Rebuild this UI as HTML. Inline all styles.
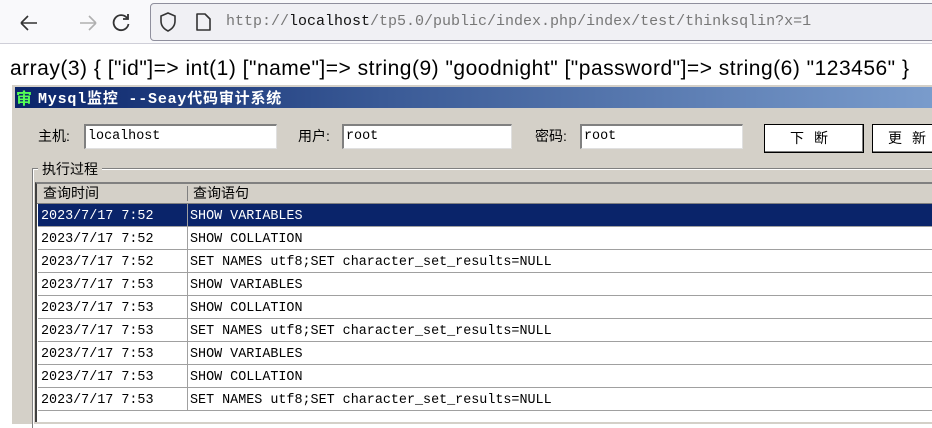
<!DOCTYPE html>
<html><head><meta charset="utf-8"><style>
*{margin:0;padding:0;box-sizing:border-box}
body{width:932px;height:417px;overflow:hidden;background:#fff;position:relative;font-family:"Liberation Sans","Noto Sans CJK SC",sans-serif}
.a{position:absolute}
.mono{font-family:"Liberation Mono","Noto Sans CJK SC",monospace}
.cjk{font-family:"Noto Sans CJK SC","WenQuanYi Zen Hei",sans-serif}
.inp{position:absolute;background:#fff;border-top:2px solid #808080;border-left:2px solid #808080;border-right:1px solid #e0e0e0;border-bottom:1px solid #e0e0e0;font:13.4px "Liberation Mono",monospace;padding:1px 0 0 2px;height:25px;line-height:20px}
.lbl{position:absolute;font-size:14px;color:#000}
.btn{position:absolute;background:#fff;border:1px solid #000;box-shadow:inset -1px -1px 0 #808080;font-size:14px;text-align:center;line-height:26px;letter-spacing:10px}
.row{position:absolute;left:38px;width:900px;height:23px;border-bottom:1px solid #a0a0a0;font:13.4px "Liberation Mono",monospace;line-height:25px;background:#fff}
.row span{position:absolute;top:0}
.row .c1{left:3px}.row .c2{left:152px}
.row .d{position:absolute;left:149px;top:0;width:1px;height:23px;background:#a0a0a0}
</style></head><body>
<div class="a" style="left:0;top:0;width:932px;height:44px;background:#f9f9fb;border-bottom:1px solid #cfcfd8"></div>
<svg class="a" style="left:18px;top:12px" width="90" height="22" viewBox="0 0 90 22">
<path d="M3 11H19M3 11L10 4M3 11L10 18" stroke="#333" stroke-width="1.6" fill="none"/>
<path d="M64 11H80M80 11L73 4M80 11L73 18" stroke="#b0b0b0" stroke-width="1.6" fill="none" transform="translate(-2 0)"/>
</svg>
<svg class="a" style="left:110px;top:12px" width="22" height="22" viewBox="0 0 22 22">
<path d="M17 6A7.5 7.5 0 1 0 18.5 12" stroke="#333" stroke-width="1.8" fill="none"/>
<path d="M18 2V7H13" stroke="#333" stroke-width="1.8" fill="none"/>
</svg>
<div class="a" style="left:150px;top:3px;width:800px;height:38px;background:#f0f0f4;border:1px solid #8f8f9d;border-radius:4px"></div>
<svg class="a" style="left:158px;top:11px" width="60" height="22" viewBox="0 0 60 22">
<path d="M10 2L3 5V10C3 15 6 18 10 20C14 18 17 15 17 10V5Z" stroke="#333" stroke-width="1.6" fill="none"/>
<path d="M39 3H47L52 8V19H39Z" stroke="#333" stroke-width="1.6" fill="none" stroke-linejoin="round"/>
</svg>
<div class="a mono" style="left:226px;top:13px;font-size:15px;color:#777;white-space:nowrap">http://<span style="color:#111">localhost</span>/tp5.0/public/index.php/index/test/thinksqlin?x=1</div>
<div class="a" style="left:10px;top:57px;font-size:21px;white-space:nowrap;color:#000;letter-spacing:0.5px">array(3) { ["id"]=&gt; int(1) ["name"]=&gt; string(9) "goodnight" ["password"]=&gt; string(6) "123456" }</div>
<!-- window -->
<div class="a" style="left:11px;top:84px;width:925px;height:340px;background:#d4d0c8;border-left:1px solid #fff;border-top:1px solid #fff"></div>
<div class="a" style="left:15px;top:87px;width:920px;height:21px;background:linear-gradient(90deg,#0a246a,#3a5a96 40%,#7a9ccc)"></div>
<div class="a cjk" style="left:16px;top:88px;width:20px;height:19px;color:#5f5;font-size:16px;line-height:19px;font-weight:bold">审</div>
<div class="a mono" style="left:38px;top:88px;color:#fff;font-size:15px;font-weight:bold;line-height:20px;white-space:nowrap;letter-spacing:0.8px">Mysql<span class="cjk">监控</span> --Seay<span class="cjk">代码审计系统</span></div>
<div class="lbl" style="left:38px;top:126px">主机:</div>
<div class="inp" style="left:84px;top:124px;width:193px">localhost</div>
<div class="lbl" style="left:298px;top:126px">用户:</div>
<div class="inp" style="left:342px;top:124px;width:170px">root</div>
<div class="lbl" style="left:535px;top:126px">密码:</div>
<div class="inp" style="left:580px;top:124px;width:163px">root</div>
<div class="btn" style="left:764px;top:124px;width:100px;height:29px">下断</div>
<div class="btn" style="left:872px;top:124px;width:80px;height:29px">更新</div>
<div class="a" style="left:32px;top:168px;width:910px;height:260px;border-top:1px solid #808080;border-left:1px solid #808080;box-shadow:inset 1px 1px 0 #fff"></div>
<div class="lbl" style="left:38px;top:159px;background:#d4d0c8;padding:0 4px;font-size:14px">执行过程</div>
<div class="a" style="left:35px;top:182px;width:905px;height:240px;border-top:2px solid #808080;border-left:2px solid #404040;background:#fff"></div>
<div class="a" style="left:37px;top:184px;width:900px;height:20px;background:#d4d0c8;border-bottom:1px solid #808080;font-size:14px;line-height:19px">
<span class="a" style="left:6px">查询时间</span><span class="a" style="left:150px;top:2px;width:1px;height:15px;background:#808080"></span><span class="a" style="left:156px">查询语句</span></div>
<div class="row" style="top:204px;background:#0a246a;color:#fff"><span class="c1">2023/7/17 7:52</span><span class="d"></span><span class="c2">SHOW VARIABLES</span></div>
<div class="row" style="top:227px"><span class="c1">2023/7/17 7:52</span><span class="d"></span><span class="c2">SHOW COLLATION</span></div>
<div class="row" style="top:250px"><span class="c1">2023/7/17 7:52</span><span class="d"></span><span class="c2">SET NAMES utf8;SET character_set_results=NULL</span></div>
<div class="row" style="top:273px"><span class="c1">2023/7/17 7:53</span><span class="d"></span><span class="c2">SHOW VARIABLES</span></div>
<div class="row" style="top:296px"><span class="c1">2023/7/17 7:53</span><span class="d"></span><span class="c2">SHOW COLLATION</span></div>
<div class="row" style="top:319px"><span class="c1">2023/7/17 7:53</span><span class="d"></span><span class="c2">SET NAMES utf8;SET character_set_results=NULL</span></div>
<div class="row" style="top:342px"><span class="c1">2023/7/17 7:53</span><span class="d"></span><span class="c2">SHOW VARIABLES</span></div>
<div class="row" style="top:365px"><span class="c1">2023/7/17 7:53</span><span class="d"></span><span class="c2">SHOW COLLATION</span></div>
<div class="row" style="top:388px"><span class="c1">2023/7/17 7:53</span><span class="d"></span><span class="c2">SET NAMES utf8;SET character_set_results=NULL</span></div>
</body></html>
